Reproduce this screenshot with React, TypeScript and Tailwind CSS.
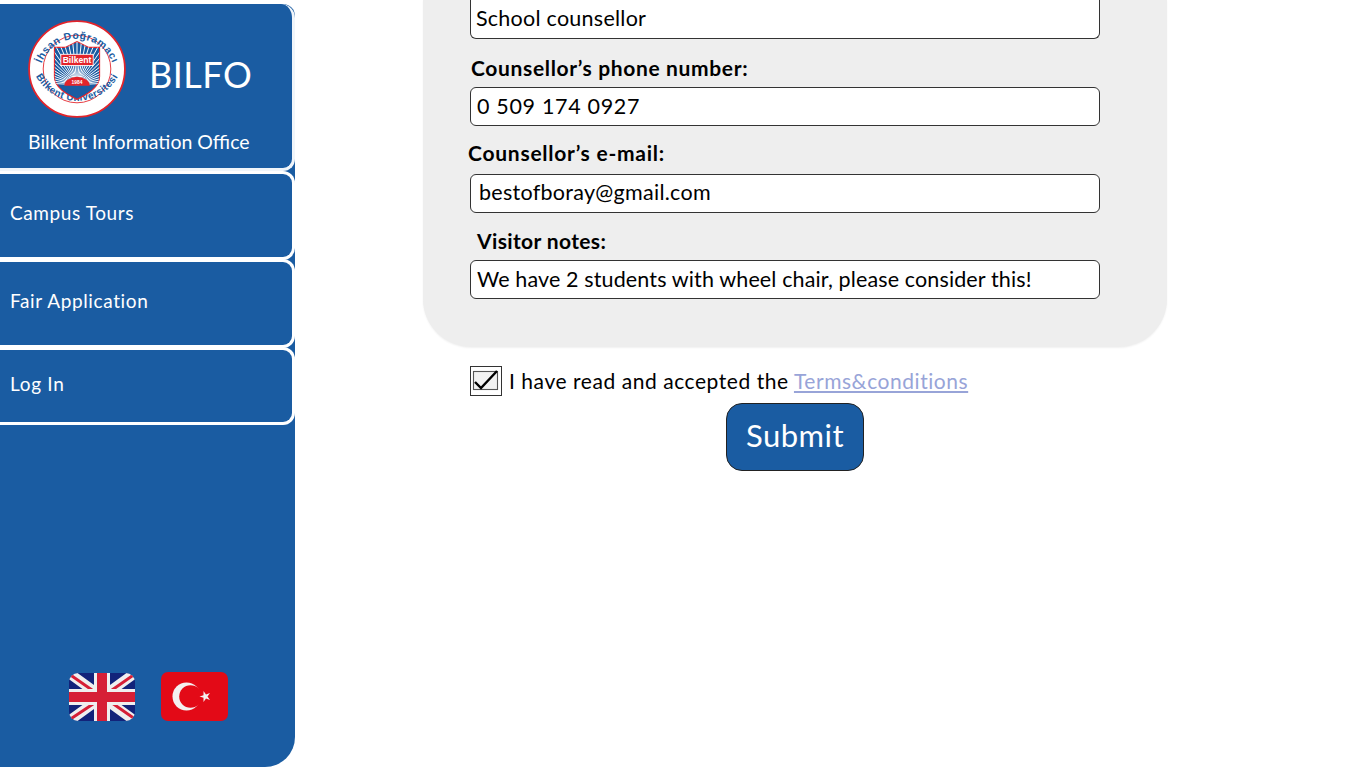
import React from "react";

const font = { fontFamily: '"Lato", "Noto Sans", sans-serif' };

function Logo() {
  const rays = [];
  for (let i = 0; i < 31; i++) {
    const a = (Math.PI * (i + 0.5)) / 31;
    const x = 50 - Math.cos(a) * 46;
    const y = 66 - Math.sin(a) * 46;
    rays.push(<line key={i} x1="50" y1="66" x2={x} y2={y} stroke="#fff" strokeWidth="1" />);
  }
  return (
    <svg viewBox="0 0 100 100" className="w-[98px] h-[98px]">
      <defs>
        <path id="arcTop" d="M 11.5 54 A 38.7 38.7 0 0 1 88.5 54" />
        <path id="arcBot" d="M 2 42 A 48.5 48.5 0 0 0 98 42" />
        <clipPath id="shieldClip">
          <path d="M27 28 L38 28 L50 22 L62 28 L73 28 V58 C73 69 60 76 50 81 C40 76 27 69 27 58 Z" />
        </clipPath>
      </defs>
      <circle cx="50" cy="50" r="48.9" fill="#fff" stroke="#e3242b" strokeWidth="1.8" />
      <circle cx="50" cy="50" r="34.5" fill="#fff" stroke="#e3242b" strokeWidth="0.9" />
      <text fontSize="10.6" fontWeight="700" fill="#1a5ca2" fontFamily="Liberation Sans, sans-serif" letterSpacing="0.55">
        <textPath href="#arcTop" startOffset="50%" textAnchor="middle">İhsan Doğramacı</textPath>
      </text>
      <text fontSize="10.2" fontWeight="700" fill="#1a5ca2" fontFamily="Liberation Sans, sans-serif" letterSpacing="0.5" dy="-1">
        <textPath href="#arcBot" startOffset="50%" textAnchor="middle">Bilkent Üniversitesi</textPath>
      </text>
      <path d="M27 28 L38 28 L50 22 L62 28 L73 28 V58 C73 69 60 76 50 81 C40 76 27 69 27 58 Z" fill="#1a5ca2" stroke="#e3242b" strokeWidth="1.2" />
      <g clipPath="url(#shieldClip)">{rays}</g>
      <path d="M35 67 H65 V71 C60 75 55 77 50 79 C45 77 40 75 35 71 Z" fill="#1a5ca2" />
      <rect x="33.5" y="35" width="33" height="11.5" fill="#e3242b" stroke="#fff" strokeWidth="0.9" />
      <text x="50" y="44" textAnchor="middle" fontSize="8.8" fontWeight="700" fill="#fff" fontFamily="Liberation Sans, sans-serif">Bilkent</text>
      <path d="M37 67 A13 9 0 0 1 63 67 Z" fill="#e3242b" />
      <text x="50" y="65.5" textAnchor="middle" fontSize="5" fontWeight="700" fill="#fff" fontFamily="Liberation Sans, sans-serif">1984</text>
    </svg>
  );
}

function UkFlag() {
  return (
    <svg viewBox="0 0 66 48" className="w-[66px] h-[48px] ml-[1px]">
      <defs>
        <clipPath id="ukClip"><rect width="66" height="48" rx="9" /></clipPath>
      </defs>
      <g clipPath="url(#ukClip)">
        <rect width="66" height="48" fill="#12237a" />
        <path d="M0 0 L66 48 M66 0 L0 48" stroke="#efefef" strokeWidth="10" />
        <path d="M0 1 L33 24 M33 23 L66 46 M66 1 L33 24 M33 25 L0 47" stroke="#d61f36" strokeWidth="3" />
        <path d="M33 0 V48 M0 24 H66" stroke="#efefef" strokeWidth="16" />
        <path d="M33 0 V48 M0 24 H66" stroke="#d61f36" strokeWidth="10" />
      </g>
    </svg>
  );
}

function TrFlag() {
  return (
    <svg viewBox="0 0 67 49" className="w-[67px] h-[49px] -mt-[1px]">
      <rect width="67" height="49" rx="7" fill="#e30a17" />
      <circle cx="25.5" cy="24.5" r="14" fill="#f4f0f0" />
      <circle cx="29.5" cy="24.5" r="11.3" fill="#e30a17" />
      <polygon
        fill="#f4f0f0"
        points="38.5,24.5 42.5,23.2 42.5,19 45,22.4 49,21.1 46.5,24.5 49,27.9 45,26.6 42.5,30 42.5,25.8"
      />
    </svg>
  );
}

function NavItem({ label, cls }: { label: string; cls: string }) {
  return (
    <a className={`flex items-start w-[295px] pl-[10px] text-white text-[19px] border-[3px] border-l-0 border-white rounded-r-[12px] ${cls}`}>
      {label}
    </a>
  );
}

function Field({ label, labelCls, value, valueCls }: { label?: string; labelCls?: string; value: string; valueCls: string }) {
  return (
    <div>
      {label && <div className={`font-bold text-black text-[21px] leading-[26px] ${labelCls}`}>{label}</div>}
      <div className={`h-[39px] w-[630px] bg-white border border-[#333] rounded-[6px] flex items-center text-black text-[21.5px] ${valueCls}`}>
        {value}
      </div>
    </div>
  );
}

export default function App() {
  return (
    <div style={font} className="flex w-[1366px] h-[768px] overflow-hidden bg-white">
      <aside className="w-[295px] shrink-0 mt-[4px] h-[763px] bg-[#1a5ca2] rounded-tr-[12px] rounded-br-[30px] flex flex-col">
        <div className="h-[167px] w-[295px] shrink-0 border-r-[3px] border-b-[3px] border-[#f0f5fa] rounded-tr-[14px] rounded-br-[12px]">
          <div className="flex items-center pl-[28px] pt-[16px]">
            <Logo />
            <span className="ml-[23px] text-white text-[36px] leading-[48px] tracking-[0.5px] relative top-[5px]">BILFO</span>
          </div>
          <div className="text-white text-[19.5px] leading-[24px] pl-[28px] mt-[12px]">Bilkent Information Office</div>
        </div>
        <div className="flex flex-col">
          <NavItem label="Campus Tours" cls="h-[89px] pt-[25px] tracking-[0.6px]" />
          <NavItem label="Fair Application" cls="h-[89px] -mt-[1px] pt-[25px] tracking-[0.62px]" />
          <NavItem label="Log In" cls="h-[78px] -mt-[1px] pt-[20px] tracking-[0.7px]" />
        </div>
        <div className="mt-[248px] flex gap-[26px] pl-[68px]">
          <UkFlag />
          <TrFlag />
        </div>
      </aside>

      <main className="ml-[128px] w-[744px] flex flex-col">
        <div className="h-[347px] bg-[#eeeeee] rounded-b-[48px] pl-[47px] shadow-[0_1px_2px_rgba(0,0,0,0.06)]">
          <Field value="School counsellor" valueCls="pl-[5px] pb-[2px] rounded-t-none border-t-0 tracking-[0.25px]" />
          <div className="mt-[16px]">
            <Field label="Counsellor’s phone number:" labelCls="pl-[1px] mb-[6px] tracking-[0.65px]" value="0 509 174 0927" valueCls="pl-[6px] tracking-[0.67px]" />
          </div>
          <div className="mt-[15px]">
            <Field label="Counsellor’s e-mail:" labelCls="-ml-[2px] -mt-[1px] mb-[8px] tracking-[0.75px]" value="bestofboray@gmail.com" valueCls="pl-[8px] pb-[3px] tracking-[0.28px]" />
          </div>
          <div className="mt-[15px]">
            <Field label="Visitor notes:" labelCls="pl-[7px] mb-[6px] tracking-[0.37px]" value="We have 2 students with wheel chair, please consider this!" valueCls="pl-[6px] tracking-[0.13px]" />
          </div>
        </div>
        <div className="pl-[47px] mt-[19px] flex items-center h-[30px]">
          <span className="w-[32px] h-[30px] border border-[#333] bg-white">
            <svg viewBox="0 0 30 28" className="w-[30px] h-[28px]">
              <rect x="2.5" y="4.5" width="24" height="18" fill="#f2f2f2" stroke="#555" strokeWidth="1.1" />
              <path d="M4 15 L10 21 L26 4" fill="none" stroke="#000" strokeWidth="2.4" />
            </svg>
          </span>
          <span className="ml-[7px] text-black text-[21px] tracking-[0.55px]">
            I have read and accepted the <a className="text-[#98a4d8] underline">Terms&amp;conditions</a>
          </span>
        </div>
        <div className="mt-[7px] pl-[303px]">
          <button className="w-[138px] h-[68px] pb-[3px] bg-[#1a5ca2] text-white text-[31px] tracking-[0.5px] rounded-[16px] border border-[#222]">
            Submit
          </button>
        </div>
      </main>
    </div>
  );
}
